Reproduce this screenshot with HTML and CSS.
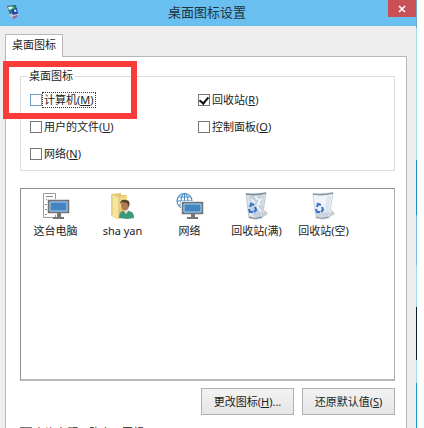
FILE: index.html
```html
<!DOCTYPE html>
<html lang="zh-CN">
<head>
    <meta charset="UTF-8">
    <meta name="viewport" content="width=device-width, initial-scale=1.0">
    <title>桌面图标设置</title>
    <link rel="stylesheet" href="styles.css">
</head>
<body>
    <div class="window">
        <header class="titlebar">
            <svg class="app-icon" width="14" height="14" viewBox="0 0 14 14">
                <path d="M1 1l9-1 1 6-7 3z" fill="#34536a"/>
                <path d="M2 2l7-1 1 5-5 2z" fill="#2aa467"/>
                <path d="M2 2l4-.5 1 1.500-4 2z" fill="#e2f6f4"/>
                <path d="M5 5l6-2 1 6-5 1z" fill="#2546a5"/>
                <path d="M8 5l2-.5.5 2-2 .5z" fill="#f2f5ff"/>
                <path d="M4 9l3 1 5-1 1 1-5 3-4-2z" fill="#d3c6cf"/>
                <path d="M6 12l5-2 1 1-4 3z" fill="#8d6d86"/>
            </svg>
            <h1 class="title">桌面图标设置</h1>
            <button class="close" type="button" aria-label="关闭">
                <svg width="8" height="8" viewBox="0 0 8 8"><path d="M1 1l6 6M7 1L1 7" stroke="#fff" stroke-width="1.6"/></svg>
            </button>
        </header>

        <div class="content">
            <div class="tabs">
                <button class="tab" type="button">桌面图标</button>
            </div>
            <div class="panel">
                <fieldset class="group">
                    <legend>桌面图标</legend>
                    <div class="checks">
                        <label class="check focused"><input type="checkbox"><span>计算机(<u>M</u>)</span></label>
                        <label class="check"><input type="checkbox" checked><span>回收站(<u>R</u>)</span></label>
                        <label class="check"><input type="checkbox"><span>用户的文件(<u>U</u>)</span></label>
                        <label class="check"><input type="checkbox"><span>控制面板(<u>O</u>)</span></label>
                        <label class="check"><input type="checkbox"><span>网络(<u>N</u>)</span></label>
                    </div>
                    <div class="marker"></div>
                </fieldset>

                <ul class="icons">
                    <li>
                        <svg width="28" height="28" viewBox="0 0 28 28">
                            <path d="M1.500 1.500h12v24h-12z" fill="#fff" stroke="#9a9a9a"/>
                            <path d="M4 4.500h7M4 7.500h7M3 12.500h2M3 17.500h2M3 22.500h2" stroke="#888"/>
                            <path d="M5 7h23v16H5z" fill="#fff"/>
                            <path d="M6.500 8.500h20v12h-20z" fill="#4583c1" stroke="#77736f" stroke-width="1.500"/>
                            <path d="M8 10h17v9H8z" fill="none" stroke="#a9d5f4"/>
                            <path d="M15 21h4v4h-4z" fill="#777"/><path d="M11 25h11v2H11z" fill="#777"/>
                        </svg>
                        <span>这台电脑</span>
                    </li>
                    <li>
                        <svg width="28" height="28" viewBox="0 0 28 28">
                            <path d="M2 2l10-1v2h6v22l-10 2-6-3z" fill="#e5c873"/>
                            <path d="M2 2l8 4v21l-8-3z" fill="#f6e5a2"/>
                            <path d="M10 6l8-3v8l-8 7z" fill="#f0d98f"/>
                            <path d="M3 3v20M10 6v20" stroke="#d6b65d" stroke-width=".8"/>
                            <path d="M10 26c0-5 2-7 6-8l4 1c4 1 5 3 5 7l-7 1z" fill="#3d987a"/>
                            <path d="M14 18l3 4 3-4-1-2h-4z" fill="#e9e2cb"/>
                            <ellipse cx="16" cy="13.500" rx="4" ry="5" fill="#b17950"/>
                            <path d="M11 12c0-4 3-5 6-4 4 0 4 4 3 7l-2-4-5-1z" fill="#544332"/>
                        </svg>
                        <span class="latin">sha yan</span>
                    </li>
                    <li>
                        <svg width="28" height="28" viewBox="0 0 28 28">
                            <g fill="none" stroke="#4b8fc6" stroke-width="1.100">
                                <circle cx="8.500" cy="9" r="7.500"/><ellipse cx="8.500" cy="9" rx="3.500" ry="7.500"/>
                                <path d="M8.500 1.500v15M1 9h15M2.500 5h12M2.500 13h12"/>
                            </g>
                            <path d="M5 9h23v15H5z" fill="#fff"/>
                            <path d="M6.500 10.500h20v11h-20z" fill="#4583c1" stroke="#77736f" stroke-width="1.500"/>
                            <path d="M8 12h17v8H8z" fill="none" stroke="#a9d5f4"/>
                            <path d="M15 22h4v3h-4z" fill="#777"/><path d="M11 25h11v2H11z" fill="#777"/>
                        </svg>
                        <span>网络</span>
                    </li>
                    <li>
                        <svg width="28" height="28" viewBox="0 0 28 28">
                            <path d="M18 26l7-4-3-4z" fill="#ccc"/>
                            <path d="M3 2l20-1-4 25-6 1-7-1z" fill="#dce4ea" stroke="#b3bec7" stroke-width=".8"/>
                            <path d="M6 5l4-2 3 3 4-3 4 2-2 6 1 4-2 10-6 1-4-8-1-8z" fill="#c3d1dc"/>
                            <path d="M12 5l5 4-3 5 4 6M19 6l-4 5 3 2M8 7l4 4" fill="none" stroke="#f5f9fb" stroke-width="1.500"/>
                            <path d="M3 2q10 2 20-1" fill="none" stroke="#828d97" stroke-width="1.500"/>
                            <path d="M6 25q6 3 13 0" fill="none" stroke="#78838c"/>
                            <path d="M7 15l1-3 3 1M6 17l1 3h3M11 20l2-2-1-3" fill="none" stroke="#3a74cc" stroke-width="2.200"/>
                        </svg>
                        <span>回收站(满)</span>
                    </li>
                    <li>
                        <svg width="28" height="28" viewBox="0 0 28 28">
                            <path d="M18 26l7-4-3-4z" fill="#ccc"/>
                            <path d="M3 2l20-1-4 25-6 1-7-1z" fill="#f0f4f8" stroke="#bcc7d0" stroke-width=".8"/>
                            <path d="M17 4h4l-3 20h-4z" fill="#dce6ed"/>
                            <path d="M6 21l13-1-1 5-5 1-6-1z" fill="#cbd5dd"/>
                            <path d="M3 2q10 2 20-1" fill="none" stroke="#8b99a4" stroke-width="1.500"/>
                            <path d="M6 25q6 3 13 0" fill="none" stroke="#89949d"/>
                            <path d="M7 15l1-3 3 1M6 17l1 3h3M11 20l2-2-1-3" fill="none" stroke="#3a74cc" stroke-width="2.200"/>
                        </svg>
                        <span>回收站(空)</span>
                    </li>
                </ul>

                <div class="buttons">
                    <button type="button">更改图标(<u>H</u>)...</button>
                    <button type="button">还原默认值(<u>S</u>)</button>
                </div>

                <label class="check theme"><input type="checkbox"><span>允许主题更改桌面图标(<u>L</u>)</span></label>
            </div>
        </div>
    </div>
    <div class="desktop"></div>
</body>
</html>
```
FILE: styles.css
```css
* {
    box-sizing: border-box;
}
body {
    display: flex;
    height: 100vh;
    margin: 0;
    padding-right: 7px;
    overflow: hidden;
    background: #fff;
    color: #222;
    font-family: "Noto Sans", "Noto Sans CJK SC", sans-serif;
    font-size: 11px;
    line-height: 16px;
}
button {
    padding: 0;
    color: inherit;
    font: inherit;
}
.window {
    flex: 1;
    background: #eee;
}
/* sliver of the desktop behind the window */
.desktop {
    width: 1px;
    background: linear-gradient(#69a9cc 28px, #a4dcec 28px 160px, #1c91ca 160px 215px, #72b9e5 215px 265px, #a0dcec 265px 307px, #07202f 307px 360px, #a0dcec 360px 383px, #169bd0 383px);
}

.titlebar {
    display: flex;
    align-items: flex-start;
    height: 26px;
    padding-left: 6px;
    background: #69c0f0;
}
.app-icon {
    margin-top: 5px;
}
.title {
    flex: 1;
    margin: 0;
    padding-left: 6px;
    color: #20323e;
    font-size: 13px;
    font-weight: normal;
    line-height: 25px;
    text-align: center;
}
.close {
    display: flex;
    align-items: center;
    justify-content: center;
    width: 28px;
    height: 17px;
    border: none;
    background: #c85056;
}

.content {
    padding: 8px 9px 0 5px;
}
.tabs {
    display: flex;
}
.tab {
    position: relative;
    z-index: 1;
    width: 58px;
    height: 23px;
    margin-bottom: -1px;
    padding-bottom: 2px;
    border: 1px solid #b8b8b8;
    border-bottom: none;
    background: #fff;
}
.panel {
    padding: 11px 11px 20px 14px;
    border: 1px solid #b8b8b8;
    background: #fff;
}

.group {
    position: relative;
    margin: 0;
    padding: 6px 9px;
    border: 1px solid #ddd;
}
.group legend {
    margin-left: -3px;
    padding: 0 2px;
}
.checks {
    display: grid;
    grid-template-columns: 168px 1fr;
    row-gap: 7px;
}
.check {
    display: flex;
    align-items: center;
    gap: 1px;
    height: 20px;
}
.check input {
    display: grid;
    place-items: center;
    width: 12px;
    height: 12px;
    margin: 0;
    border: 1px solid #777;
    background: #fff;
    appearance: none;
}
.check input:checked::after {
    content: "";
    width: 4px;
    height: 7px;
    margin-bottom: 2px;
    border: solid #111;
    border-width: 0 2px 2px 0;
    transform: rotate(40deg);
}
.check span {
    padding: 0 1px;
    line-height: 14px;
}
.focused input {
    border-color: #6fa0c4;
}
.focused span {
    outline: 1px dotted #333;
}
/* highlight drawn over the first option */
.marker {
    position: absolute;
    top: -23px;
    left: -18px;
    width: 134px;
    height: 58px;
    border: 6px solid #fb3a3a;
    pointer-events: none;
}

.icons {
    display: flex;
    height: 193px;
    margin: 17px 0 0;
    padding: 3px 0 0 1px;
    border: 1px solid #8a8d93;
    border-right-color: #aaa;
    border-bottom: 2px solid #b8b8b8;
    list-style: none;
}
.icons li {
    display: flex;
    flex-direction: column;
    align-items: center;
    gap: 3px;
    width: 67px;
}
.icons .latin {
    font-size: 11px;
}

.buttons {
    display: flex;
    justify-content: flex-end;
    gap: 8px;
    margin-top: 7px;
}
.buttons button {
    width: 93px;
    height: 27px;
    border: 1px solid #b0b0b0;
    background: linear-gradient(#f2f2f2, #e6e6e6);
}
.theme {
    margin-top: 8px;
}
```
